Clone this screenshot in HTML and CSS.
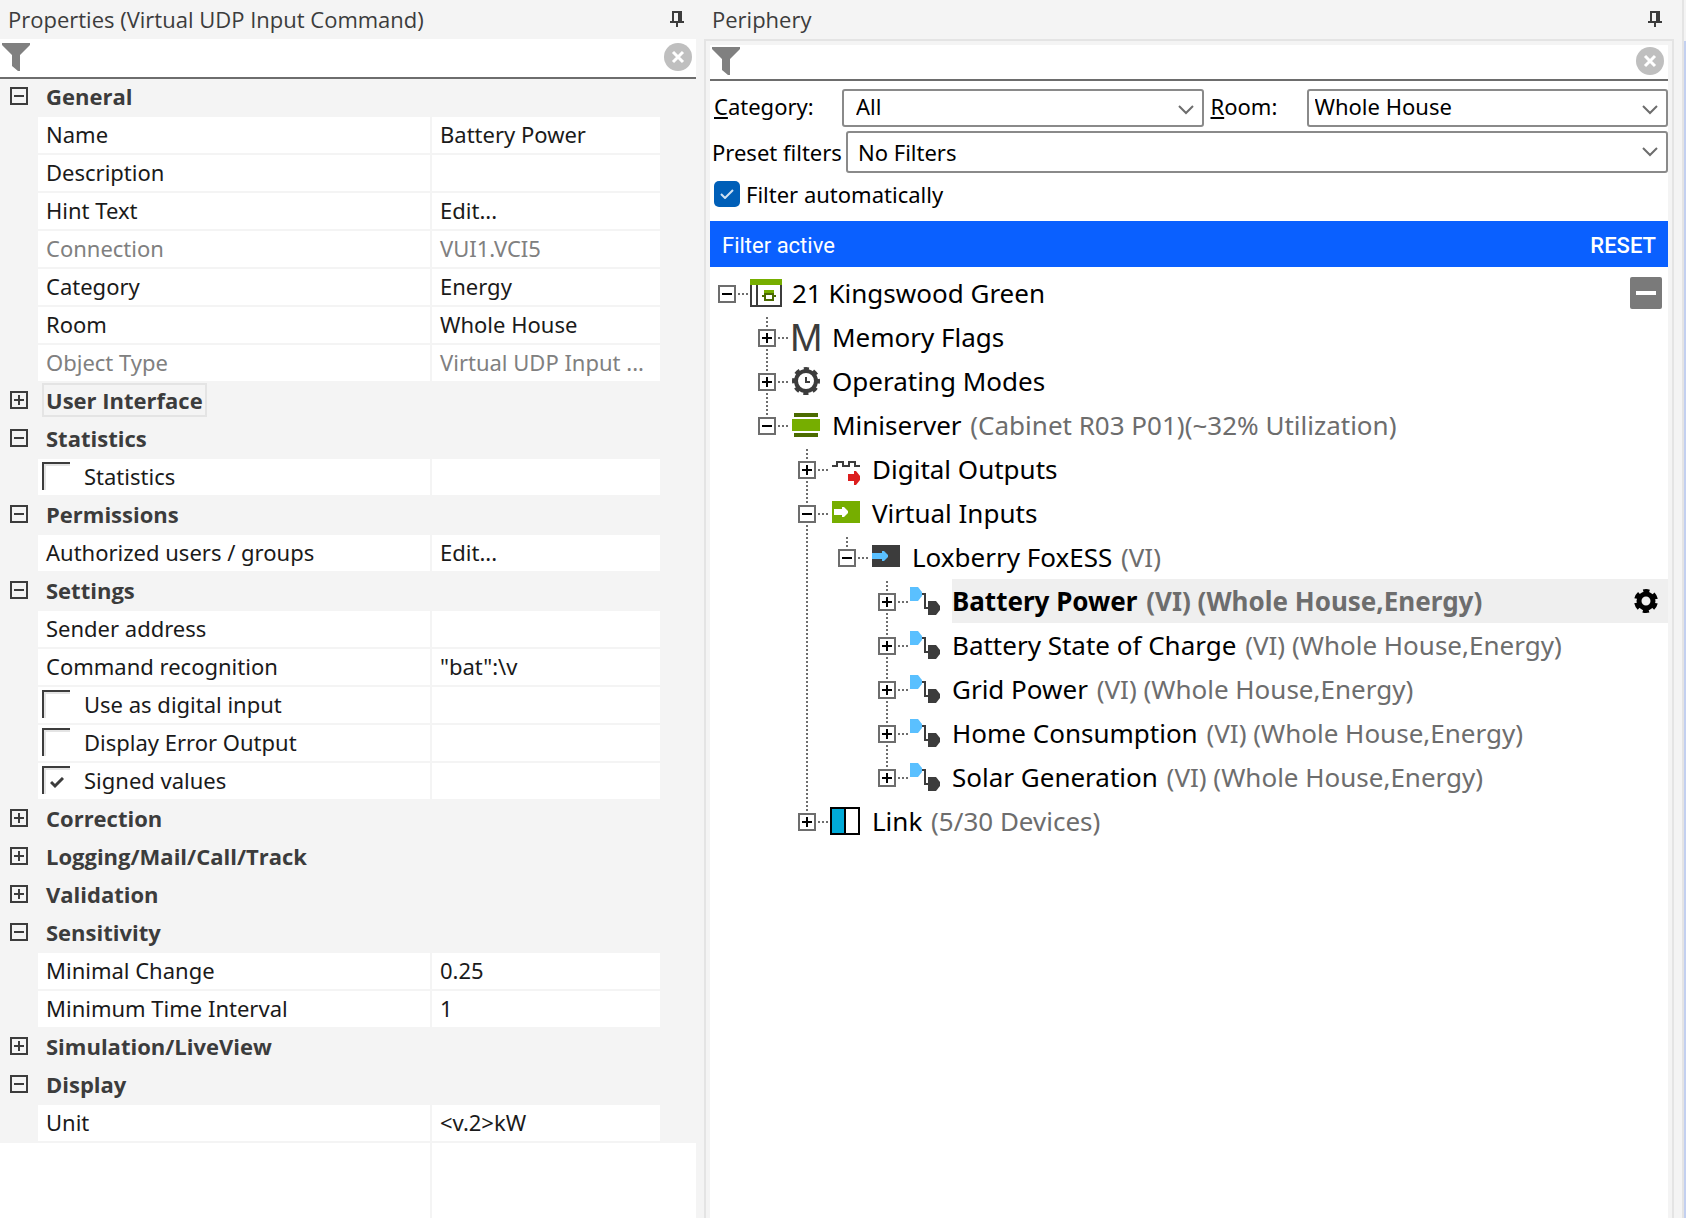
FILE: index.html
```html
<!DOCTYPE html>
<html lang="en">
<head>
<meta charset="utf-8">
<title>Properties and Periphery</title>
<link rel="stylesheet" href="styles.css">
</head>
<body>
<svg class="defs" aria-hidden="true">
  <symbol id="pin" viewBox="0 0 14 16"><path d="M2 0H12V10H14V12H8V16H6V12H0V10H2ZM4 2V10H8V2Z"/></symbol>
  <symbol id="funnel" viewBox="0 0 28 28"><path d="M0 0H28V2L18 12V28H16L10 23V12L0 2Z"/></symbol>
  <symbol id="clear" viewBox="0 0 28 28"><circle cx="14" cy="14" r="14" fill="#bfbfbf"/><path d="M9 9L19 19M19 9L9 19" stroke="#fff" stroke-width="3"/></symbol>
  <symbol id="command" viewBox="0 0 42 44"><path d="M0 8H8L12 13V17L8 22H0Z" fill="#5ac0ff"/><path d="M12 15H15V29H19" fill="none" stroke="#3c3c3c" stroke-width="2"/><path d="M18 22H26L30 27V31L26 36H18Z" fill="#3c3c3c"/></symbol>
</svg>
<main class="workspace">
  <section class="properties">
    <header class="titlebar"><h1>Properties (Virtual UDP Input Command)</h1><button class="plain" aria-label="Pin properties"><svg class="pin"><use href="#pin"/></svg></button></header>
    <div class="search"><svg class="funnel"><use href="#funnel"/></svg><input type="text" aria-label="Filter properties"><button class="plain" aria-label="Clear filter"><svg class="clear"><use href="#clear"/></svg></button></div>
    <table class="grid">
      <colgroup><col class="c-toggle"><col class="c-name"><col class="c-value"><col class="c-end"></colgroup>
      <tbody>
      <tr class="group"><td><button class="toggle" aria-label="Collapse"></button></td><th colspan="3"><span>General</span></th></tr>
      <tr><td></td><td class="name">Name</td><td class="value">Battery Power</td><td></td></tr>
      <tr><td></td><td class="name">Description</td><td class="value"></td><td></td></tr>
      <tr><td></td><td class="name">Hint Text</td><td class="value"><button class="plain">Edit...</button></td><td></td></tr>
      <tr class="locked"><td></td><td class="name">Connection</td><td class="value">VUI1.VCI5</td><td></td></tr>
      <tr><td></td><td class="name">Category</td><td class="value">Energy</td><td></td></tr>
      <tr><td></td><td class="name">Room</td><td class="value">Whole House</td><td></td></tr>
      <tr class="locked"><td></td><td class="name">Object Type</td><td class="value">Virtual UDP Input ...</td><td></td></tr>
      <tr class="group current"><td><button class="toggle closed" aria-label="Expand"></button></td><th colspan="3"><span>User Interface</span></th></tr>
      <tr class="group"><td><button class="toggle" aria-label="Collapse"></button></td><th colspan="3"><span>Statistics</span></th></tr>
      <tr><td></td><td class="name check"><label><input type="checkbox">Statistics</label></td><td class="value"></td><td></td></tr>
      <tr class="group"><td><button class="toggle" aria-label="Collapse"></button></td><th colspan="3"><span>Permissions</span></th></tr>
      <tr><td></td><td class="name">Authorized users / groups</td><td class="value"><button class="plain">Edit...</button></td><td></td></tr>
      <tr class="group"><td><button class="toggle" aria-label="Collapse"></button></td><th colspan="3"><span>Settings</span></th></tr>
      <tr><td></td><td class="name">Sender address</td><td class="value"></td><td></td></tr>
      <tr><td></td><td class="name">Command recognition</td><td class="value">"bat":\v</td><td></td></tr>
      <tr><td></td><td class="name check"><label><input type="checkbox">Use as digital input</label></td><td class="value"></td><td></td></tr>
      <tr><td></td><td class="name check"><label><input type="checkbox">Display Error Output</label></td><td class="value"></td><td></td></tr>
      <tr><td></td><td class="name check"><label><input type="checkbox" checked>Signed values</label></td><td class="value"></td><td></td></tr>
      <tr class="group"><td><button class="toggle closed" aria-label="Expand"></button></td><th colspan="3"><span>Correction</span></th></tr>
      <tr class="group"><td><button class="toggle closed" aria-label="Expand"></button></td><th colspan="3"><span>Logging/Mail/Call/Track</span></th></tr>
      <tr class="group"><td><button class="toggle closed" aria-label="Expand"></button></td><th colspan="3"><span>Validation</span></th></tr>
      <tr class="group"><td><button class="toggle" aria-label="Collapse"></button></td><th colspan="3"><span>Sensitivity</span></th></tr>
      <tr><td></td><td class="name">Minimal Change</td><td class="value">0.25</td><td></td></tr>
      <tr><td></td><td class="name">Minimum Time Interval</td><td class="value">1</td><td></td></tr>
      <tr class="group"><td><button class="toggle closed" aria-label="Expand"></button></td><th colspan="3"><span>Simulation/LiveView</span></th></tr>
      <tr class="group"><td><button class="toggle" aria-label="Collapse"></button></td><th colspan="3"><span>Display</span></th></tr>
      <tr><td></td><td class="name">Unit</td><td class="value">&lt;v.2&gt;kW</td><td></td></tr>
      </tbody>
    </table>
    <div class="blank"><div class="blank-name"></div></div>
  </section>

  <section class="periphery">
    <header class="titlebar"><h1>Periphery</h1><button class="plain" aria-label="Pin periphery"><svg class="pin"><use href="#pin"/></svg></button></header>
    <div class="frame">
      <div class="search"><svg class="funnel"><use href="#funnel"/></svg><input type="text" aria-label="Filter periphery"><button class="plain" aria-label="Clear filter"><svg class="clear"><use href="#clear"/></svg></button></div>
      <div class="filters">
        <label for="category"><u>C</u>ategory:</label>
        <select id="category"><option>All</option></select>
        <label for="room" class="room"><u>R</u>oom:</label>
        <select id="room" class="tight"><option>Whole House</option></select>
      </div>
      <div class="presets">
        <label for="preset">Preset filters</label>
        <select id="preset"><option>No Filters</option></select>
      </div>
      <label class="auto"><input type="checkbox" checked>Filter automatically</label>
      <div class="banner"><span>Filter active</span><button class="plain">RESET</button></div>
      <ul class="tree">
        <li>
          <div class="node"><button class="toggle" aria-label="Collapse"></button><i class="dots"></i>
            <svg class="icon" viewBox="0 0 42 44"><path d="M1 14V35H31V14M7 14V35" fill="none" stroke="#3c3c3c" stroke-width="2"/><path d="M0 8H32V14H0Z" fill="#76ae00"/><path d="M14 19H24V23H14Z" fill="#76ae00"/><path d="M15 23V29H23V23M12 25H16M22 25H26M14 23H24" fill="none" stroke="#4b6b00" stroke-width="2"/></svg>
            <span class="label">21 Kingswood Green</span><button class="plain collapse-all" aria-label="Collapse all"></button></div>
          <ul>
            <li><div class="node"><button class="toggle closed" aria-label="Expand"></button><i class="dots"></i>
              <svg class="icon" viewBox="0 0 42 44"><text x="0" y="36" class="letter">M</text></svg>
              <span class="label">Memory Flags</span></div></li>
            <li><div class="node"><button class="toggle closed" aria-label="Expand"></button><i class="dots"></i>
              <svg class="icon" viewBox="0 0 42 44"><g fill="none" stroke="#3c3c3c"><circle cx="16" cy="22" r="10" stroke-width="4"/><circle cx="16" cy="22" r="12" stroke-width="4" stroke-dasharray="5 4.425" stroke-dashoffset="2.5"/><path d="M16 18V23H20" stroke-width="2"/></g></svg>
              <span class="label">Operating Modes</span></div></li>
            <li><div class="node"><button class="toggle" aria-label="Collapse"></button><i class="dots"></i>
              <svg class="icon" viewBox="0 0 42 44"><path d="M4 10H28V14H4ZM4 30H28V34H4Z" fill="#4b6b00"/><path d="M2 16H30V28H2Z" fill="#76ae00"/></svg>
              <span class="label">Miniserver <em>(Cabinet R03 P01)(~32% Utilization)</em></span></div>
              <ul>
                <li><div class="node"><button class="toggle closed" aria-label="Expand"></button><i class="dots"></i>
                  <svg class="icon" viewBox="0 0 42 44"><path d="M2 19H7V15H13V19H19V15H25V19H30" fill="none" stroke="#3c3c3c" stroke-width="2"/><path d="M18 27H24V24H26L30 29V33L26 38H24V34H18Z" fill="#dc1e1e"/></svg>
                  <span class="label">Digital Outputs</span></div></li>
                <li><div class="node"><button class="toggle" aria-label="Collapse"></button><i class="dots"></i>
                  <svg class="icon" viewBox="0 0 42 44"><path d="M2 10H30V32H2Z" fill="#76ae00"/><path d="M4 18H12V16H14L18 20V22L14 26H12V24H4Z" fill="#fff"/></svg>
                  <span class="label">Virtual Inputs</span></div>
                  <ul>
                    <li><div class="node"><button class="toggle" aria-label="Collapse"></button><i class="dots"></i>
                      <svg class="icon" viewBox="0 0 42 44"><path d="M2 10H30V32H2Z" fill="#3c3c3c"/><path d="M2 18H12V16H14L18 20V22L14 26H12V24H2Z" fill="#5ac0ff"/></svg>
                      <span class="label">Loxberry FoxESS <em>(VI)</em></span></div>
                      <ul>
                        <li><div class="node selected"><button class="toggle closed" aria-label="Expand"></button><i class="dots"></i><svg class="icon"><use href="#command"/></svg><span class="label">Battery Power <em>(VI) (Whole House,Energy)</em></span><button class="plain gear" aria-label="Settings"><svg viewBox="0 0 24 24"><g fill="none" stroke="#000"><circle cx="12" cy="12" r="7" stroke-width="5"/><circle cx="12" cy="12" r="10" stroke-width="4" stroke-dasharray="6 4.472" stroke-dashoffset="-2.236"/></g></svg></button></div></li>
                        <li><div class="node"><button class="toggle closed" aria-label="Expand"></button><i class="dots"></i><svg class="icon"><use href="#command"/></svg><span class="label">Battery State of Charge <em>(VI) (Whole House,Energy)</em></span></div></li>
                        <li><div class="node"><button class="toggle closed" aria-label="Expand"></button><i class="dots"></i><svg class="icon"><use href="#command"/></svg><span class="label">Grid Power <em>(VI) (Whole House,Energy)</em></span></div></li>
                        <li><div class="node"><button class="toggle closed" aria-label="Expand"></button><i class="dots"></i><svg class="icon"><use href="#command"/></svg><span class="label">Home Consumption <em>(VI) (Whole House,Energy)</em></span></div></li>
                        <li><div class="node"><button class="toggle closed" aria-label="Expand"></button><i class="dots"></i><svg class="icon"><use href="#command"/></svg><span class="label">Solar Generation <em>(VI) (Whole House,Energy)</em></span></div></li>
                      </ul>
                    </li>
                  </ul>
                </li>
                <li><div class="node"><button class="toggle closed" aria-label="Expand"></button><i class="dots"></i>
                  <svg class="icon" viewBox="0 0 42 44"><path d="M0 8H30V36H0Z"/><path d="M2 10H14V34H2Z" fill="#00aad8"/><path d="M16 10H28V34H16Z" fill="#fff"/></svg>
                  <span class="label">Link <em>(5/30 Devices)</em></span></div></li>
              </ul>
            </li>
          </ul>
        </li>
      </ul>
    </div>
  </section>
  <div class="edge"></div>
</main>
</body>
</html>
```
FILE: styles.css
```css
* { box-sizing: border-box; }

body {
  margin: 0;
  background: #f4f4f4;
  color: #000;
  font: 22px/28px "Noto Sans", "Open Sans", sans-serif;
}

button, input, select { font: inherit; color: inherit; margin: 0; }
svg { display: block; }
.defs { position: absolute; width: 0; height: 0; }

.plain { padding: 0; border: 0; background: none; text-align: left; }

.workspace {
  display: grid;
  grid-template-columns: minmax(0, 696fr) minmax(0, 970fr) 4px;
  column-gap: 8px;
  min-height: 100vh;
}
.properties, .periphery { display: flex; flex-direction: column; }

/* Title bars */
.titlebar {
  display: flex;
  align-items: center;
  justify-content: space-between;
  height: 39px;
  padding: 0 12px 2px 8px;
  color: #3c3c3c;
}
.titlebar h1 { margin: 0; font-size: 22px; font-weight: 400; font-family: "Open Sans", sans-serif; white-space: nowrap; }
.pin { width: 14px; height: 16px; fill: #3c3c3c; }

/* Search rows */
.search {
  display: flex;
  align-items: center;
  height: 40px;
  padding: 0 4px 2px 2px;
  border-bottom: 2px solid #6d6d6d;
  background: #fff;
}
.search input { flex: 1; min-width: 0; height: 28px; border: 0; outline: 0; background: none; }
.funnel { width: 28px; height: 28px; fill: #808080; }
.clear { width: 28px; height: 28px; }

/* Expand and collapse boxes */
.toggle {
  display: block;
  flex: none;
  width: 18px;
  height: 18px;
  padding: 0;
  border: 2px solid #3c3c3c;
  background: linear-gradient(#3c3c3c, #3c3c3c) center / 10px 2px no-repeat;
}
.toggle.closed {
  background:
    linear-gradient(#3c3c3c, #3c3c3c) center / 10px 2px no-repeat,
    linear-gradient(#3c3c3c, #3c3c3c) center / 2px 10px no-repeat;
}

/* Property grid */
.grid { width: 100%; table-layout: fixed; border-collapse: separate; border-spacing: 0; color: #1a1a1a; }
.c-toggle { width: 38px; }
.c-value { width: 228px; }
.c-end { width: 36px; }
.grid tr { height: 38px; }
.grid td, .grid th { padding: 0; white-space: nowrap; }
.grid .group td, .grid .group th { padding-bottom: 4px; }
.grid .toggle { margin-left: 10px; }
.grid .name, .grid .value { padding: 0 8px 2px; border-bottom: 2px solid #f4f4f4; background: #fff; }
.grid .name { border-right: 2px solid #f4f4f4; }
.grid th { text-align: left; color: #3c3c3c; font-family: "Open Sans", sans-serif; font-weight: 700; }
.grid th span { display: inline-block; margin-left: 4px; padding: 1px 2px; border: 2px solid transparent; }
.grid .current span { border-color: #e4e4e4; }
.locked { color: #808080; }
.grid .check { padding: 0 4px 2px; }
.check label { display: flex; align-items: center; gap: 14px; }
.check input {
  appearance: none;
  width: 28px;
  height: 28px;
  border: solid #3c3c3c;
  border-width: 2px 0 0 2px;
  box-shadow: inset 2px 2px #e4e4e4;
}
.check input:checked {
  background: url("data:image/svg+xml,%3Csvg xmlns='http://www.w3.org/2000/svg' width='14' height='12'%3E%3Cpath d='M1 5L5 9L13 1' fill='none' stroke='%233c3c3c' stroke-width='3'/%3E%3C/svg%3E") 6px 9px no-repeat;
}
.blank { display: flex; flex: 1; background: #fff; }
.blank-name { flex: none; width: calc(100% - 264px); border-right: 2px solid #f4f4f4; }

/* Periphery */
.frame {
  flex: 1;
  padding: 4px 4px 0;
  border: solid #e4e4e4;
  border-width: 2px 2px 0;
  background: linear-gradient(#fff, #fff) content-box;
}
.frame .search { height: 36px; }
.filters { display: grid; grid-template-columns: 132px 1fr 103px 1fr; align-items: center; margin-top: 8px; }
.filters label { padding: 0 0 4px 4px; }
.filters .room { padding-left: 7px; }
.filters select { height: 38px; padding: 0 32px 4px 12px; }
.filters .tight { padding-left: 6px; }
.presets { display: grid; grid-template-columns: 136px 1fr; align-items: center; margin-top: 4px; }
.presets label { padding-left: 2px; }
.presets select { height: 42px; padding: 0 32px 0 10px; }
select {
  appearance: none;
  width: 100%;
  border: 2px solid #8a8a8a;
  border-radius: 3px;
  background: #fff url("data:image/svg+xml,%3Csvg xmlns='http://www.w3.org/2000/svg' width='16' height='10'%3E%3Cpath d='M1 1L8 8L15 1' fill='none' stroke='%236d6d6d' stroke-width='2'/%3E%3C/svg%3E") right 8px top 14px no-repeat;
}
.auto { display: flex; align-items: center; gap: 6px; height: 42px; margin-bottom: 6px; padding-left: 4px; }
.auto input {
  appearance: none;
  width: 26px;
  height: 26px;
  border-radius: 5px;
  background: #005fb8 url("data:image/svg+xml,%3Csvg xmlns='http://www.w3.org/2000/svg' width='14' height='10'%3E%3Cpath d='M1 5L5 9L13 1' fill='none' stroke='%23cfe2f3' stroke-width='2'/%3E%3C/svg%3E") center no-repeat;
}
.banner {
  display: flex;
  align-items: center;
  justify-content: space-between;
  height: 46px;
  padding: 4px 12px 0;
  background: #0a60ff;
  color: #fff;
  font-family: Roboto, "Liberation Sans", sans-serif;
}
.banner button { font-weight: 500; }

/* Tree */
.tree, .tree ul { margin: 0; padding: 0; list-style: none; }
.tree { padding-top: 4px; font-size: 26px; line-height: 44px; }
.tree ul { padding-left: 40px; }
.tree li { position: relative; }
.tree ul > li::before {
  content: "";
  position: absolute;
  left: 16px;
  top: 2px;
  bottom: 0;
  width: 2px;
  background: repeating-linear-gradient(#6d6d6d 0 2px, transparent 2px 4px);
}
.tree ul > li:last-child::before { bottom: auto; height: 12px; }
.node { display: flex; align-items: center; height: 44px; padding-left: 8px; }
.tree .toggle {
  position: relative;
  margin-top: 2px;
  border-color: #6d6d6d;
  background-color: #fff;
  outline: 2px solid #fff;
  --mark: linear-gradient(#000, #000);
  background-image: var(--mark);
}
.tree .toggle.closed { background-image: var(--mark), var(--mark); }
.dots {
  flex: none;
  width: 10px;
  height: 2px;
  margin: 2px 2px 0;
  background: repeating-linear-gradient(90deg, #6d6d6d 0 2px, transparent 2px 4px);
}
.icon { flex: none; width: 42px; height: 44px; }
.letter { font: 39px "Liberation Sans", sans-serif; fill: #3c3c3c; }
.label { flex: 1; white-space: nowrap; }
.label em { margin-left: 2px; font-style: normal; color: #6d6d6d; }
.selected .label { background: #efefef; font-weight: 700; }
.collapse-all {
  width: 32px;
  height: 32px;
  margin-right: 6px;
  border-radius: 2px;
  background: linear-gradient(#fff, #fff) center / 20px 4px no-repeat #7a7a7a;
}
.gear { display: flex; align-items: center; height: 44px; padding-right: 10px; background: #efefef; }
.gear svg { width: 24px; height: 24px; }

.edge { border-left: 2px solid #e4e4e4; background: linear-gradient(#f4f4f4 41px, #c3d0f0 41px); }
```
